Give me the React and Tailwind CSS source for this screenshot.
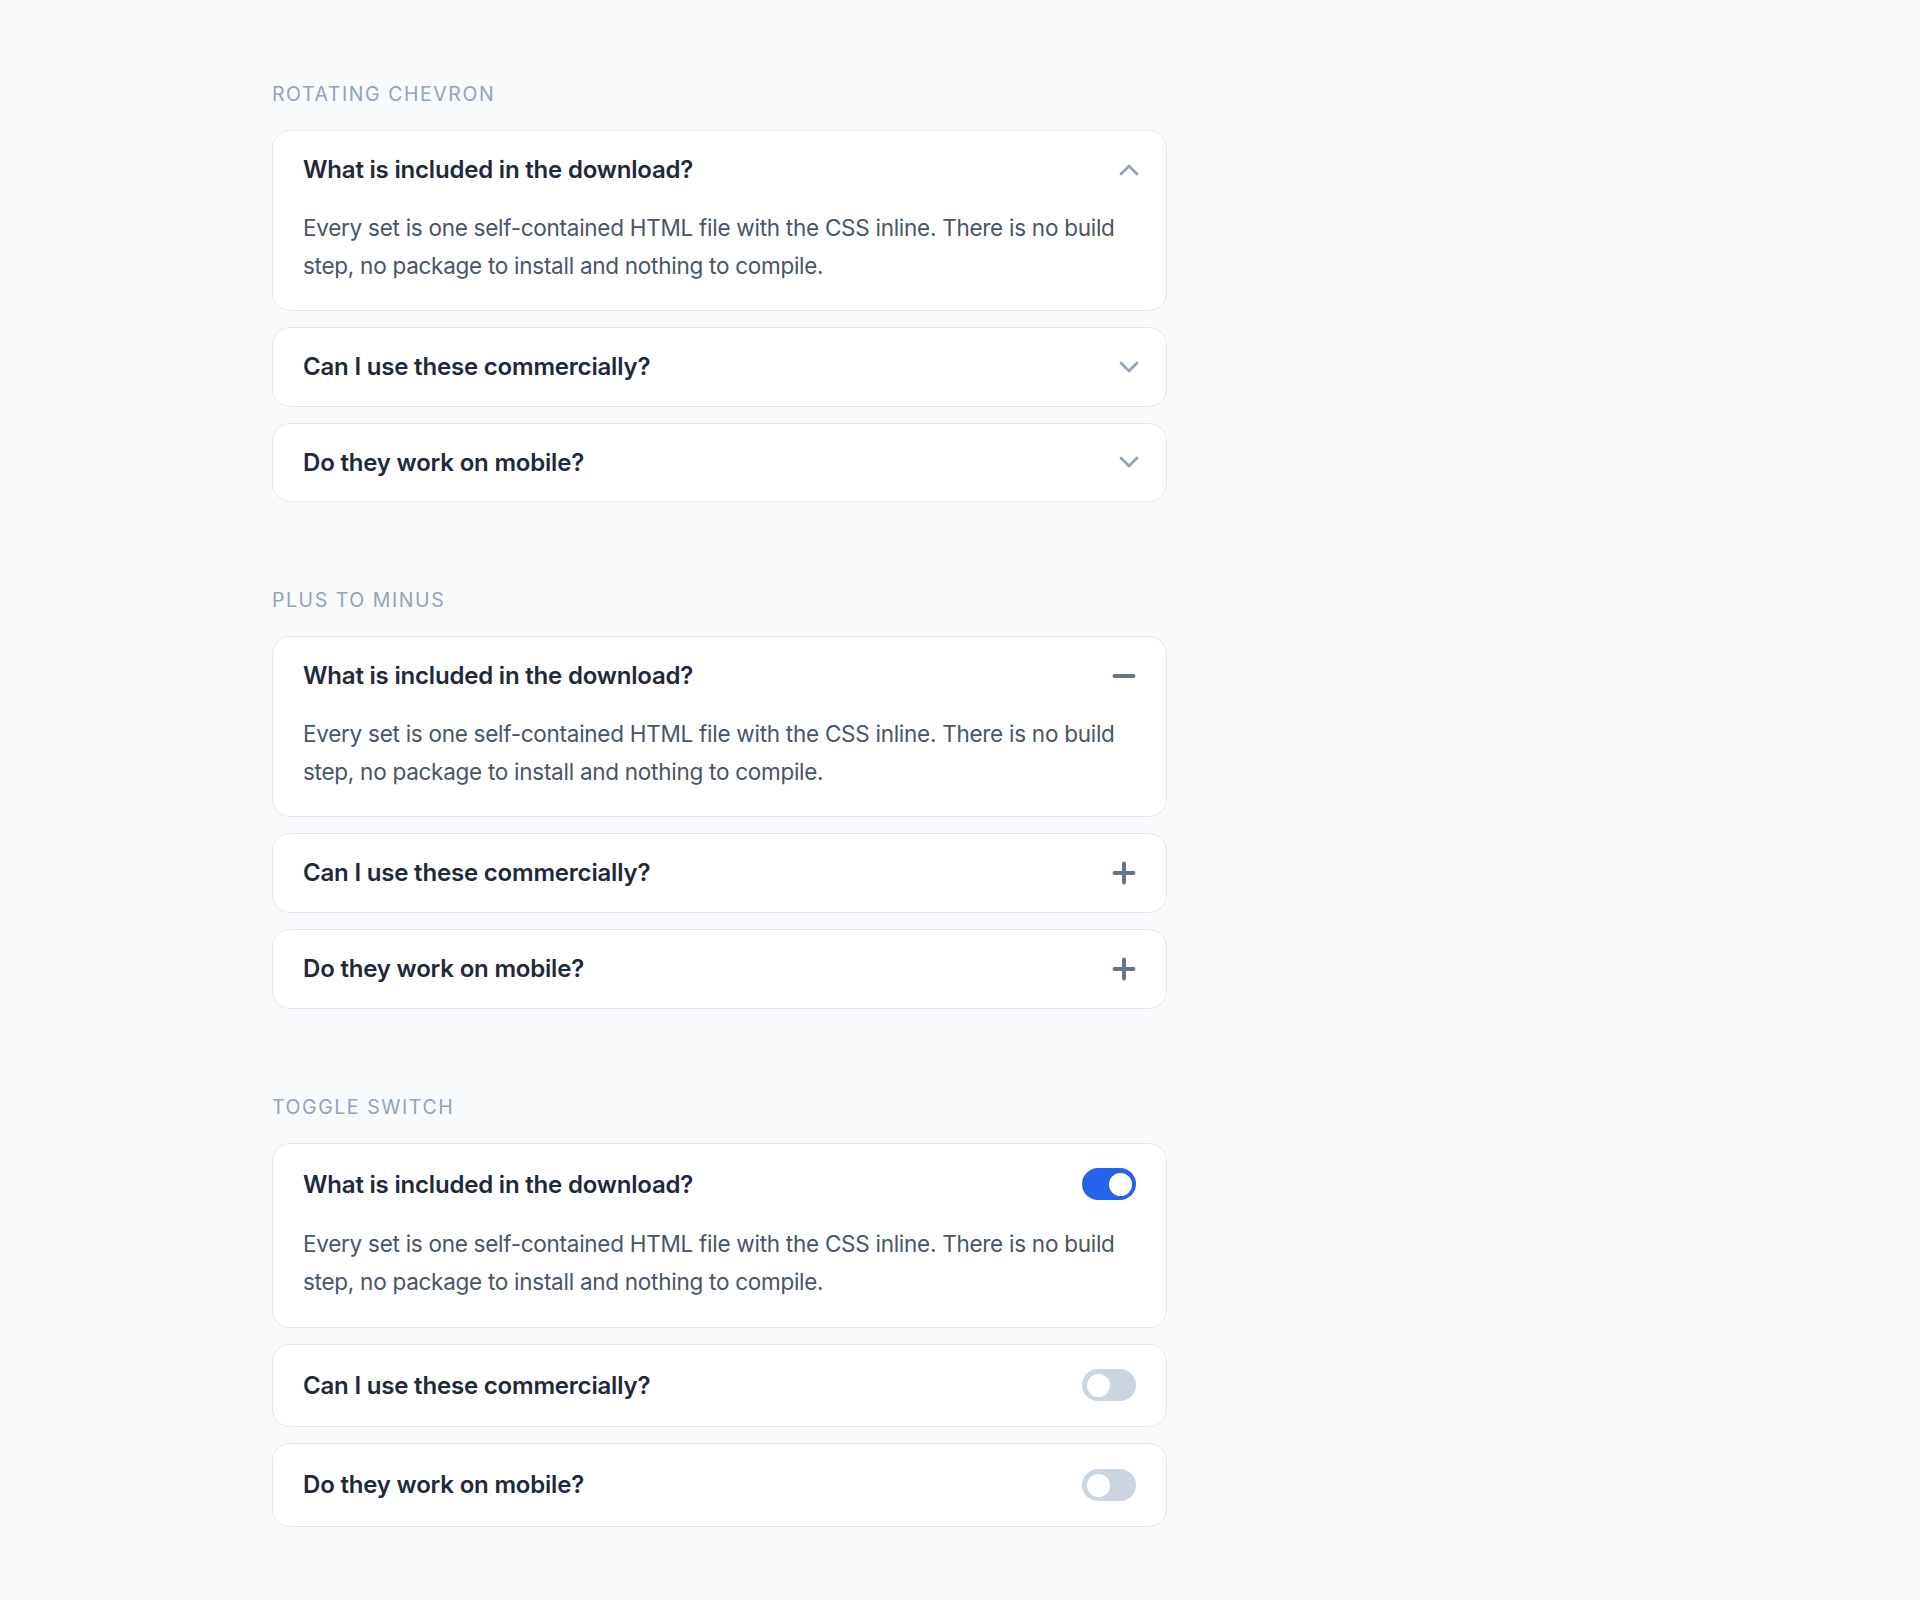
import { useState } from 'react'

const faqs = [
  {
    q: 'What is included in the download?',
    a: 'Every set is one self-contained HTML file with the CSS inline. There is no build step, no package to install and nothing to compile.',
  },
  {
    q: 'Can I use these commercially?',
    a: 'Yes. Use them in client work, products and anything else you build.',
  },
  {
    q: 'Do they work on mobile?',
    a: 'Every accordion is responsive and works with touch as well as keyboard.',
  },
]

function Chevron({ open }) {
  return (
    <svg
      width="20"
      height="12"
      viewBox="0 0 20 12"
      fill="none"
      stroke="#94a3b8"
      strokeWidth="2.75"
      strokeLinecap="round"
      strokeLinejoin="round"
      className={`-mr-[3px] shrink-0 transition-transform ${open ? 'rotate-180' : ''}`}
    >
      <polyline points="2,2 10,10 18,2" />
    </svg>
  )
}

function PlusMinus({ open }) {
  return (
    <svg
      width="24"
      height="24"
      viewBox="0 0 24 24"
      fill="none"
      stroke="#64748b"
      strokeWidth="4"
      strokeLinecap="round"
      className="shrink-0"
    >
      <line x1="2.5" y1="12" x2="21.5" y2="12" />
      {!open && <line x1="12" y1="2.5" x2="12" y2="21.5" />}
    </svg>
  )
}

function Toggle({ open }) {
  return (
    <span
      className={`flex h-[32px] w-[54px] shrink-0 items-center rounded-full px-[4.5px] ${
        open ? 'justify-end bg-[#2563eb]' : 'justify-start bg-[#cbd5e1]'
      }`}
    >
      <span className="h-[23px] w-[23px] rounded-full bg-white" />
    </span>
  )
}

function Accordion({ title, variant }) {
  const [openIndex, setOpenIndex] = useState(0)

  return (
    <section>
      <h2 className="mb-[24px] text-[19.5px] leading-[24px] tracking-[0.08em] text-[#94a3b8] uppercase">
        {title}
      </h2>
      <div className="flex flex-col gap-[16px]">
        {faqs.map((item, i) => {
          const open = openIndex === i
          return (
            <div key={item.q} className="rounded-[18px] border border-[#e2e8f0] bg-white">
              <button
                type="button"
                onClick={() => setOpenIndex(open ? -1 : i)}
                className={`flex w-full items-center justify-between gap-6 px-[30px] text-left ${
                  variant === 'toggle' ? 'py-[24px]' : 'py-[22px]'
                }`}
              >
                <span className="text-[24px] leading-[33.6px] font-semibold tracking-[-0.008em] text-[#1e293b]">
                  {item.q}
                </span>
                {variant === 'chevron' && <Chevron open={open} />}
                {variant === 'plus' && <PlusMinus open={open} />}
                {variant === 'toggle' && <Toggle open={open} />}
              </button>
              {open && (
                <p className="px-[30px] pb-[25px] text-[22.5px] leading-[38.25px] tracking-[-0.012em] text-[#475569]">
                  {item.a}
                </p>
              )}
            </div>
          )
        })}
      </div>
    </section>
  )
}

export default function App() {
  return (
    <div className="min-h-screen bg-[#f8fafc] pt-[82px] pb-[80px] pl-[272px] font-['Inter','Noto_Sans',sans-serif]">
      <div className="flex w-[895px] flex-col gap-[86px]">
        <Accordion title="Rotating chevron" variant="chevron" />
        <Accordion title="Plus to minus" variant="plus" />
        <Accordion title="Toggle switch" variant="toggle" />
      </div>
    </div>
  )
}
